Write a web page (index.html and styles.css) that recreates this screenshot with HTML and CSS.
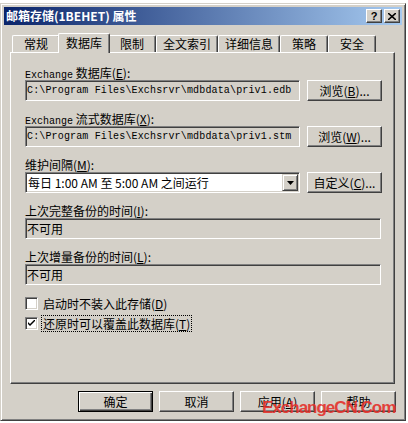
FILE: index.html
```html
<!DOCTYPE html>
<html lang="zh-CN">
<head>
    <meta charset="UTF-8">
    <meta name="viewport" content="width=device-width, initial-scale=1.0">
    <title>邮箱存储(1BEHET) 属性</title>
    <link rel="stylesheet" href="styles.css">
</head>
<body>

    <div class="window">
        <!-- Title bar -->
        <div class="titlebar">
            <span class="title">邮箱存储(1BEHET) 属性</span>
            <div class="title-buttons">
                <span class="tbtn help">?</span>
                <span class="tbtn">
                    <svg width="8" height="7" viewBox="0 0 8 7"><path d="M0 0 L8 7 M8 0 L0 7" stroke="#000" stroke-width="1.6"/></svg>
                </span>
            </div>
        </div>

        <!-- Tabs -->
        <div class="tabs">
            <div class="tab">常规</div>
            <div class="tab active">数据库</div>
            <div class="tab">限制</div>
            <div class="tab">全文索引</div>
            <div class="tab">详细信息</div>
            <div class="tab">策略</div>
            <div class="tab">安全</div>
        </div>

        <!-- Database page -->
        <div class="panel">
            <div class="group">
                <div class="label"><span class="latin">Exchange</span> 数据库(<u>E</u>):</div>
                <div class="row">
                    <div class="field path">C:\Program Files\Exchsrvr\mdbdata\priv1.edb</div>
                    <button class="btn">浏览(<u>B</u>)...</button>
                </div>
            </div>
            <div class="group">
                <div class="label"><span class="latin">Exchange</span> 流式数据库(<u>X</u>):</div>
                <div class="row">
                    <div class="field path">C:\Program Files\Exchsrvr\mdbdata\priv1.stm</div>
                    <button class="btn">浏览(<u>W</u>)...</button>
                </div>
            </div>
            <div class="group">
                <div class="label">维护间隔(<u>M</u>):</div>
                <div class="row">
                    <div class="field combo">
                        <span>每日 1:00 AM 至 5:00 AM 之间运行</span>
                        <span class="drop">
                            <svg width="7" height="4" viewBox="0 0 7 4"><path d="M0 0 H7 L3.5 4 Z" fill="#000"/></svg>
                        </span>
                    </div>
                    <button class="btn">自定义(<u>C</u>)...</button>
                </div>
            </div>
            <div class="group">
                <div class="label">上次完整备份的时间(<u>I</u>):</div>
                <div class="field wide">不可用</div>
            </div>
            <div class="group">
                <div class="label">上次增量备份的时间(<u>L</u>):</div>
                <div class="field wide">不可用</div>
            </div>

            <div class="checks">
                <label class="check">
                    <span class="box"></span>
                    <span>启动时不装入此存储(<u>D</u>)</span>
                </label>
                <label class="check">
                    <span class="box">
                        <svg width="7" height="7" viewBox="0 0 7 7"><path d="M0 2 V4 L2 6 L7 1 V-1 L2 4 Z" fill="#000"/></svg>
                    </span>
                    <span class="focus">还原时可以覆盖此数据库(<u>T</u>)</span>
                </label>
            </div>
        </div>

        <!-- Dialog buttons -->
        <div class="footer">
            <button class="btn default">确定</button>
            <button class="btn">取消</button>
            <button class="btn">应用(<u>A</u>)</button>
            <button class="btn">帮助</button>
        </div>

        <div class="watermark">ExchangeCN.Com</div>
    </div>

</body>
</html>
```

FILE: styles.css
```css
/* Classic dialog look */
body {
    margin: 0;
    background-color: #fff;
    font-family: "Noto Sans CJK SC", sans-serif;
    font-size: 12px;
    color: #000;
}
u {
    text-decoration: underline;
}
.window {
    position: relative;
    box-sizing: border-box;
    width: 406px;
    height: 418px;
    margin-top: 3px;
    padding: 3px;
    background-color: #d4d0c8;
    border: 1px solid;
    border-color: #d4d0c8 #404040 #404040 #d4d0c8;
    box-shadow: inset 1px 1px #fff, inset -1px -1px #808080;
}

/* Title bar */
.titlebar {
    height: 18px;
    display: flex;
    align-items: center;
    justify-content: space-between;
    padding: 0 2px 0 2px;
    background: linear-gradient(to right, #0a246a, #a6caf0);
}
.title {
    color: #fff;
    font-weight: bold;
    line-height: 18px;
}
.title-buttons {
    display: flex;
    gap: 2px;
}
.tbtn {
    box-sizing: border-box;
    width: 16px;
    height: 14px;
    display: flex;
    align-items: center;
    justify-content: center;
    background-color: #d4d0c8;
    border: 1px solid;
    border-color: #fff #404040 #404040 #fff;
    box-shadow: inset -1px -1px #808080;
}
.tbtn.help {
    font-family: "Liberation Sans", sans-serif;
    font-weight: bold;
    font-size: 11px;
    line-height: 12px;
}

/* Tabs */
.tabs {
    display: flex;
    align-items: flex-end;
    height: 19px;
    margin-top: 8px;
    padding-left: 8px;
}
.tab {
    box-sizing: border-box;
    min-width: 48px;
    height: 17px;
    padding: 0 6px;
    line-height: 16px;
    text-align: center;
    background-color: #d4d0c8;
    border-top: 1px solid #fff;
    border-left: 1px solid #fff;
    border-right: 1px solid #404040;
    border-radius: 2px 2px 0 0;
    box-shadow: inset -1px 0 #808080;
}
.tab.active {
    position: relative;
    z-index: 1;
    height: 20px;
    margin: 0 -2px -1px;
    line-height: 18px;
    min-width: 52px;
}

/* Tab page */
.panel {
    box-sizing: border-box;
    width: 385px;
    height: 332px;
    margin-left: 6px;
    padding: 13px 0 0 14px;
    border: 1px solid;
    border-color: #fff #404040 #404040 #fff;
    box-shadow: inset -1px -1px #808080;
}
.group + .group {
    margin-top: 11px;
}
.label {
    line-height: 13px;
    height: 13px;
    margin-bottom: 1px;
    white-space: nowrap;
}
.latin {
    font-family: "Liberation Mono", monospace;
    font-size: 10px;
}
.row {
    display: flex;
    gap: 7px;
}

/* Sunken edit boxes */
.field {
    box-sizing: border-box;
    height: 21px;
    padding: 0 1px;
    line-height: 19px;
    white-space: nowrap;
    overflow: hidden;
    background-color: #d4d0c8;
    border: 1px solid;
    border-color: #808080 #fff #fff #808080;
    box-shadow: inset 1px 1px #404040, inset -1px -1px #d4d0c8;
}
.field.path {
    width: 275px;
    font-family: "Liberation Mono", monospace;
    font-size: 10px;
    letter-spacing: 0.15px;
}
.field.wide {
    width: 356px;
}
.field.combo {
    width: 275px;
    display: flex;
    justify-content: space-between;
    align-items: center;
    padding: 1px 1px 1px 2px;
    background-color: #fff;
}
.drop {
    box-sizing: border-box;
    width: 16px;
    height: 17px;
    display: flex;
    align-items: center;
    justify-content: center;
    background-color: #d4d0c8;
    border: 1px solid;
    border-color: #d4d0c8 #404040 #404040 #d4d0c8;
    box-shadow: inset 1px 1px #fff, inset -1px -1px #808080;
}

/* Raised buttons */
.btn {
    box-sizing: border-box;
    width: 75px;
    height: 21px;
    padding: 0;
    font-family: inherit;
    font-size: 12px;
    color: #000;
    background-color: #d4d0c8;
    border: 1px solid;
    border-color: #fff #404040 #404040 #fff;
    box-shadow: inset -1px -1px #808080;
}
.btn.default {
    border-color: #000;
    box-shadow: inset 1px 1px #fff, inset -1px -1px #404040, inset -2px -2px #808080;
}

/* Check boxes */
.checks {
    display: flex;
    flex-direction: column;
    gap: 7px;
    margin-top: 12px;
}
.check {
    display: flex;
    align-items: center;
    gap: 5px;
    height: 13px;
    line-height: 13px;
}
.box {
    box-sizing: border-box;
    width: 13px;
    height: 13px;
    display: flex;
    align-items: center;
    justify-content: center;
    background-color: #fff;
    border: 1px solid;
    border-color: #808080 #fff #fff #808080;
    box-shadow: inset 1px 1px #404040, inset -1px -1px #d4d0c8;
}
.focus {
    outline: 1px dotted #000;
    outline-offset: 1px;
}

/* Bottom buttons */
.footer {
    display: flex;
    justify-content: flex-end;
    gap: 6px;
    margin-top: 7px;
    padding-right: 6px;
}

.watermark {
    position: absolute;
    left: 261px;
    top: 395px;
    font-family: "Liberation Sans", sans-serif;
    font-weight: bold;
    font-size: 17px;
    line-height: 17px;
    letter-spacing: -1px;
    color: #e4312b;
    opacity: 0.9;
    white-space: nowrap;
}
```
